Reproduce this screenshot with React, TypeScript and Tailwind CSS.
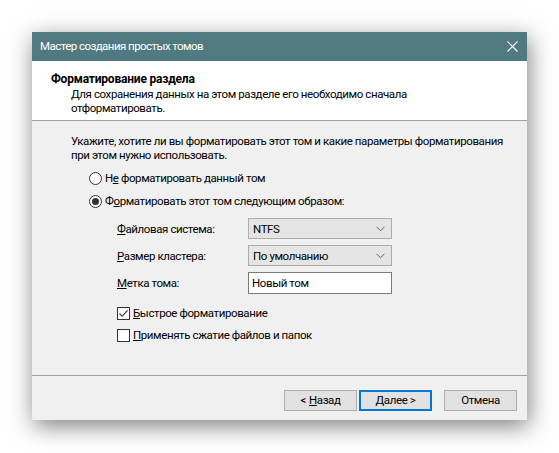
import React from "react"

const font = { fontFamily: 'Roboto, "Liberation Sans", Arial, sans-serif' }

function Chevron() {
  return (
    <svg width="9" height="6" viewBox="0 0 9 6" className="shrink-0">
      <path d="M0.5 0.8 L4.5 4.8 L8.5 0.8" fill="none" stroke="#606060" strokeWidth="1" />
    </svg>
  )
}

function Combo({ value }: { value: string }) {
  return (
    <div className="flex h-[21px] w-[144px] items-center justify-between border border-[#adadad] bg-[#e5e5e5] pl-[4px] pr-[6px] text-black">
      <span>{value}</span>
      <Chevron />
    </div>
  )
}

function Radio({ checked }: { checked?: boolean }) {
  return (
    <span className="flex h-[13px] w-[13px] shrink-0 items-center justify-center rounded-full border border-[#333333] bg-white">
      {checked && <span className="h-[7px] w-[7px] rounded-full bg-[#333333]" />}
    </span>
  )
}

function Check({ checked }: { checked?: boolean }) {
  return (
    <span className="flex h-[13px] w-[13px] shrink-0 items-center justify-center border border-[#333333] bg-white">
      {checked && (
        <svg width="11" height="11" viewBox="0 0 11 11">
          <path d="M1.5 5.5 L4.2 8.3 L9.6 2.3" fill="none" stroke="#333333" strokeWidth="1.1" />
        </svg>
      )}
    </span>
  )
}

function Btn({ children, primary }: { children: React.ReactNode; primary?: boolean }) {
  return (
    <div
      className={
        "flex h-[21px] w-[73px] items-center justify-center bg-[#e1e1e1] text-black " +
        (primary ? "border-2 border-[#0078d7]" : "border border-[#adadad]")
      }
    >
      {children}
    </div>
  )
}

export default function App() {
  return (
    <div
      className="min-h-[453px] w-[559px] whitespace-nowrap bg-white pl-[32px] pt-[32px] text-[11.5px] tracking-[-0.4px]"
      style={font}
    >
      <div className="flex h-[388px] w-[495px] flex-col bg-[#f0f0f0] shadow-[2px_6px_22px_rgba(0,0,0,0.5)]">
        <div className="flex h-[29px] shrink-0 items-center justify-between bg-[#517a80] pl-[8px] pr-[9px] tracking-[-0.55px] text-white">
          <span>Мастер создания простых томов</span>
          <svg width="11" height="11" viewBox="0 0 11 11">
            <path d="M0.5 0.5 L10.5 10.5 M10.5 0.5 L0.5 10.5" stroke="#ffffff" strokeWidth="1.1" />
          </svg>
        </div>

        <div className="h-[60px] shrink-0 border-b border-[#a0a0a0] bg-white pl-[19px] pt-[11px] text-black">
          <p className="text-[12px] font-bold leading-[15px] tracking-[-0.2px]">Форматирование раздела</p>
          <p className="pl-[20px] leading-[14px]">
            Для сохранения данных на этом разделе его необходимо сначала
            <br />
            отформатировать.
          </p>
        </div>

        <div className="flex-1 pl-[39px] pt-[13px] leading-[14px] text-black">
          <p>
            Укажите, хотите ли вы форматировать этот том и какие параметры форматирования
            <br />
            при этом нужно использовать.
          </p>

          <div className="mt-[9px] flex items-center gap-[3px] pl-[18px]">
            <Radio />
            <span>
              Н<u>е</u> форматировать данный том
            </span>
          </div>
          <div className="mt-[9px] flex items-center gap-[3px] pl-[18px]">
            <Radio checked />
            <span>
              Ф<u>о</u>рматировать этот том следующим образом:
            </span>
          </div>

          <div className="mt-[10px] flex flex-col gap-[6px] pl-[46px]">
            <div className="flex items-center">
              <span className="w-[131px]">
                <u>Ф</u>айловая система:
              </span>
              <Combo value="NTFS" />
            </div>
            <div className="flex items-center">
              <span className="w-[131px]">
                <u>Р</u>азмер кластера:
              </span>
              <Combo value="По умолчанию" />
            </div>
            <div className="flex items-center">
              <span className="w-[131px]">
                <u>М</u>етка тома:
              </span>
              <div className="flex h-[22px] w-[144px] items-center border border-[#7a7a7a] bg-white pl-[3px]">
                Новый том
              </div>
            </div>
          </div>

          <div className="mt-[12px] flex items-center gap-[3px] pl-[46px]">
            <Check checked />
            <span>
              <u>Б</u>ыстрое форматирование
            </span>
          </div>
          <div className="mt-[8px] flex items-center gap-[3px] pl-[46px]">
            <Check />
            <span>
              <u>П</u>рименять сжатие файлов и папок
            </span>
          </div>
        </div>

        <div className="flex h-[45px] shrink-0 items-start border-t border-[#a0a0a0] pl-[252px] pt-[14px]">
          <Btn>
            &lt; <u className="ml-[3px]">Н</u>азад
          </Btn>
          <div className="ml-[2px]">
            <Btn primary>
              <u>Д</u>алее &gt;
            </Btn>
          </div>
          <div className="ml-[12px]">
            <Btn>Отмена</Btn>
          </div>
        </div>
      </div>
    </div>
  )
}
